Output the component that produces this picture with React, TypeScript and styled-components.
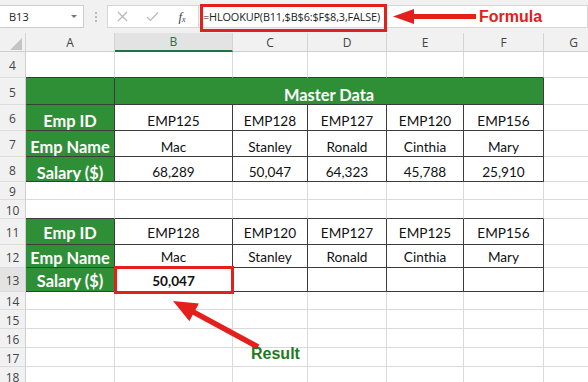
import React from "react";
import styled, { createGlobalStyle } from "styled-components";

const GlobalStyle = createGlobalStyle`
  html, body { margin: 0; padding: 0; background: #fff; }
  body { overflow: hidden; }
`;

const COLS = [26, 89, 118, 75, 79, 77, 80, 60];
const ROWS = [19, 26, 27, 26, 26, 25, 18, 19, 26, 23, 24, 18, 19, 19, 19, 19];
const LETTERS = ["A", "B", "C", "D", "E", "F", "G"];

const GREEN = "#2f8f37";
const DARK = "#3c3c3c";
const GRID = "#dadada";
const RED = "#e3201c";

const Frame = styled.div`
  position: relative;
  width: 588px;
  height: 382px;
  overflow: hidden;
  background: #fff;
  font-family: Lato, "Noto Sans", sans-serif;
`;

const FormulaBar = styled.div`
  display: flex;
  align-items: flex-start;
  height: 33px;
  padding-top: 5px;
  box-sizing: border-box;
  background: #f1f1f1;
  font-family: "Open Sans", "Noto Sans", sans-serif;
  font-size: 11px;
  color: #222;
`;

const NameBox = styled.div`
  box-sizing: border-box;
  width: 85px;
  height: 23px;
  margin-left: -1px;
  padding: 0 6px 0 9px;
  display: flex;
  align-items: center;
  justify-content: space-between;
  background: #fff;
  border: 1px solid #cfcfcf;
`;

const Caret = styled.span`
  width: 0;
  height: 0;
  border-left: 3px solid transparent;
  border-right: 3px solid transparent;
  border-top: 3px solid #777;
`;

const Grip = styled.div`
  width: 23px;
  height: 23px;
  display: flex;
  flex-direction: column;
  align-items: center;
  justify-content: center;
  gap: 2px;
`;

const GripDot = styled.span`
  width: 2px;
  height: 2px;
  background: #b9b9b9;
`;

const IconBox = styled.div`
  box-sizing: border-box;
  width: 92px;
  height: 23px;
  display: grid;
  grid-template-columns: 29px 31px 28px;
  align-items: center;
  justify-items: center;
  background: #fff;
  border: 1px solid #d6d6d6;
`;

const Fx = styled.span`
  font-family: "Liberation Serif", serif;
  font-style: italic;
  font-size: 13px;
  color: #444;
  & > sub {
    font-size: 8px;
    vertical-align: -1px;
  }
`;

const FormulaBox = styled.div`
  box-sizing: border-box;
  flex: 1;
  height: 23px;
  margin-left: -1px;
  padding-left: 4px;
  display: flex;
  align-items: center;
  background: #fff;
  border: 1px solid #d6d6d6;
  white-space: nowrap;
  font-size: 10.9px;
  letter-spacing: -0.15px;
`;

const Sheet = styled.div`
  display: grid;
  grid-template-columns: ${COLS.map((c) => `${c}px`).join(" ")};
  grid-template-rows: ${ROWS.map((r) => `${r}px`).join(" ")};
`;

const HeadBase = styled.div<{ $sel?: boolean }>`
  box-sizing: border-box;
  display: flex;
  align-items: center;
  justify-content: center;
  font-family: "Open Sans", "Noto Sans", sans-serif;
  font-size: 12px;
  color: #444;
  background: ${(p) => (p.$sel ? "#e3e3e3" : "#f1f1f1")};
`;

const Corner = styled(HeadBase)`
  border-right: 1px solid #d4d4d4;
  border-bottom: 1px solid #cfcfcf;
  align-items: flex-end;
  justify-content: flex-end;
  padding: 0 3px 1px 0;
`;

const CornerTri = styled.span`
  width: 0;
  height: 0;
  border-left: 12px solid transparent;
  border-bottom: 12px solid #c4c4c4;
`;

const ColHead = styled(HeadBase)`
  border-right: 1px solid #d4d4d4;
  border-bottom: ${(p) => (p.$sel ? "2px solid #217346" : "1px solid #cfcfcf")};
  color: ${(p) => (p.$sel ? "#217346" : "#444")};
`;

const RowHead = styled(HeadBase)`
  border-right: 1px solid #cfcfcf;
  border-bottom: 1px solid #dcdcdc;
  padding-top: 2px;
`;

type Kind = "blank" | "label" | "data" | "title";

const Cell = styled.div<{
  $kind: Kind;
  $rb?: boolean;
  $bb?: boolean;
  $span?: number;
  $pt?: number;
  $bold?: boolean;
}>`
  box-sizing: border-box;
  grid-column: span ${(p) => p.$span ?? 1};
  display: flex;
  align-items: center;
  justify-content: center;
  padding-top: ${(p) => p.$pt ?? 0}px;
  border-right: 1px solid ${(p) => (p.$rb ? DARK : GRID)};
  border-bottom: 1px solid ${(p) => (p.$bb ? DARK : GRID)};
  background: ${(p) => (p.$kind === "label" || p.$kind === "title" ? GREEN : "#fff")};
  color: ${(p) => (p.$kind === "label" || p.$kind === "title" ? "#fff" : "#111")};
  font-size: ${(p) => (p.$kind === "label" || p.$kind === "title" ? "16.4px" : "13.6px")};
  font-weight: ${(p) => (p.$kind === "label" || p.$kind === "title" || p.$bold ? 700 : 400)};
  white-space: nowrap;
  overflow: hidden;
`;

const RedBox = styled.div<{ $x: number; $y: number; $w: number; $h: number }>`
  position: absolute;
  left: ${(p) => p.$x}px;
  top: ${(p) => p.$y}px;
  width: ${(p) => p.$w}px;
  height: ${(p) => p.$h}px;
  box-sizing: border-box;
  border: 3px solid ${RED};
  pointer-events: none;
`;

const Note = styled.div<{ $x: number; $y: number; $color: string }>`
  position: absolute;
  left: ${(p) => p.$x}px;
  top: ${(p) => p.$y}px;
  font-family: "Liberation Sans", Arial, sans-serif;
  font-weight: 700;
  font-size: 16px;
  line-height: 18px;
  color: ${(p) => p.$color};
`;

const Arrow = styled.svg`
  position: absolute;
  left: 0;
  top: 0;
  pointer-events: none;
`;

const LABELS: Record<number, string> = {
  6: "Emp ID",
  7: "Emp Name",
  8: "Salary ($)",
  11: "Emp ID",
  12: "Emp Name",
  13: "Salary ($)",
};

const DATA: Record<number, string[]> = {
  6: ["EMP125", "EMP128", "EMP127", "EMP120", "EMP156"],
  7: ["Mac", "Stanley", "Ronald", "Cinthia", "Mary"],
  8: ["68,289", "50,047", "64,323", "45,788", "25,910"],
  11: ["EMP128", "EMP120", "EMP127", "EMP125", "EMP156"],
  12: ["Mac", "Stanley", "Ronald", "Cinthia", "Mary"],
  13: ["50,047", "", "", "", ""],
};

const shiftFor = (r: number) => (r >= 5 && r <= 8 ? 6 : 2);

function renderRow(r: number) {
  const cells: React.ReactNode[] = [
    <RowHead key="h" $sel={r === 13}>
      {r}
    </RowHead>,
  ];
  const pt = shiftFor(r);
  if (r === 5) {
    cells.push(<Cell key="a" $kind="label" $rb $bb />);
    cells.push(
      <Cell key="t" $kind="title" $span={5} $rb $bb $pt={pt}>
        Master Data
      </Cell>
    );
    cells.push(<Cell key="g" $kind="blank" />);
  } else if (LABELS[r]) {
    cells.push(
      <Cell key="a" $kind="label" $rb $bb $pt={pt}>
        {LABELS[r]}
      </Cell>
    );
    DATA[r].forEach((v, i) =>
      cells.push(
        <Cell key={i} $kind="data" $rb $bb $pt={pt} $bold={r === 13 && i === 0}>
          {v}
        </Cell>
      )
    );
    cells.push(<Cell key="g" $kind="blank" />);
  } else {
    const above = r === 4 || r === 10;
    for (let c = 0; c < 7; c++) {
      cells.push(<Cell key={c} $kind="blank" $bb={above && c < 6} />);
    }
  }
  return <React.Fragment key={r}>{cells}</React.Fragment>;
}

export default function App() {
  const rows = [];
  for (let r = 4; r <= 18; r++) rows.push(r);
  return (
    <>
      <GlobalStyle />
      <Frame>
        <FormulaBar>
          <NameBox>
            <span>B13</span>
            <Caret />
          </NameBox>
          <Grip>
            <GripDot />
            <GripDot />
            <GripDot />
          </Grip>
          <IconBox>
            <svg width="11" height="11" viewBox="0 0 11 11">
              <path d="M1 1 L10 10 M10 1 L1 10" stroke="#b8b8b8" strokeWidth="1.2" fill="none" />
            </svg>
            <svg width="13" height="11" viewBox="0 0 13 11">
              <path d="M1 6 L4.5 9.5 L12 1.5" stroke="#b8b8b8" strokeWidth="1.2" fill="none" />
            </svg>
            <Fx>
              f<sub>x</sub>
            </Fx>
          </IconBox>
          <FormulaBox>=HLOOKUP(B11,$B$6:$F$8,3,FALSE)</FormulaBox>
        </FormulaBar>
        <Sheet>
          <Corner>
            <CornerTri />
          </Corner>
          {LETTERS.map((l) => (
            <ColHead key={l} $sel={l === "B"}>
              {l}
            </ColHead>
          ))}
          {rows.map((r) => renderRow(r))}
        </Sheet>

        <RedBox $x={200} $y={4} $w={187} $h={28} />
        <RedBox $x={114} $y={266} $w={120} $h={28} />

        <Arrow width="588" height="382" viewBox="0 0 588 382">
          <polygon
            points="393,16.5 414,9 414,14 476,14 476,19 414,19 414,24"
            fill={RED}
          />
          <polygon
            points="173,301 198.9,303.6 195.4,310 259.3,344.6 256.7,349.4 192.8,314.8 189.4,321.2"
            fill={RED}
          />
        </Arrow>

        <Note $x={479} $y={8} $color={RED}>
          Formula
        </Note>
        <Note $x={251} $y={345} $color="#1f7a1f">
          Result
        </Note>
      </Frame>
    </>
  );
}
